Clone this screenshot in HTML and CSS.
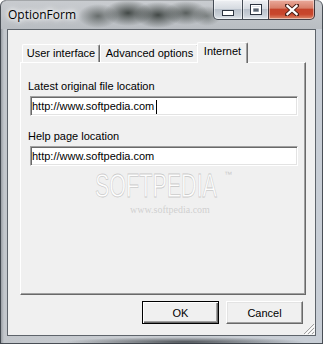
FILE: index.html
```html
<!DOCTYPE html>
<html>
<head>
<meta charset="utf-8">
<link rel="stylesheet" href="styles.css">
</head>
<body>
<div class="window">
  <div class="titlebar">
    <span class="title">OptionForm</span>
    <div class="caption-buttons">
      <div class="cb cb-min">
        <svg width="12" height="6" viewBox="0 0 12 6"><rect x="0.5" y="0.5" width="11" height="5" fill="#fff" stroke="#2c3440" stroke-width="1"/></svg>
      </div>
      <div class="cb cb-max">
        <svg width="12" height="11" viewBox="0 0 12 11"><rect x="0.5" y="0.5" width="11" height="10" fill="none" stroke="#2c3440"/><rect x="1.5" y="1.5" width="9" height="8" fill="none" stroke="#fff" stroke-width="1"/><rect x="2.5" y="3.5" width="7" height="5" fill="none" stroke="#fff" stroke-width="1"/><rect x="3.5" y="4.5" width="5" height="3" fill="#5a6470"/></svg>
      </div>
      <div class="cb cb-close">
        <svg width="14" height="12" viewBox="0 0 14 12"><path d="M2 1.5 L12 10.5 M12 1.5 L2 10.5" stroke="#4a2018" stroke-width="4.2" stroke-linecap="square"/><path d="M2.4 1.9 L11.6 10.1 M11.6 1.9 L2.4 10.1" stroke="#fff" stroke-width="2.2" stroke-linecap="square"/></svg>
      </div>
    </div>
  </div>
  <div class="client">
    <div class="tabctl">
      <div class="tabstrip">
        <div class="tab tab-ui">User interface</div>
        <div class="tab tab-adv">Advanced options</div>
        <div class="tab tab-net active">Internet</div>
      </div>
      <div class="panel">
        <div class="label">Latest original file location</div>
        <div class="input">http://www.softpedia.com<span class="caret"></span></div>
        <div class="label label-2">Help page location</div>
        <div class="input">http://www.softpedia.com</div>
      </div>
    </div>
    <div class="buttons">
      <button class="btn btn-default">OK</button>
      <button class="btn">Cancel</button>
    </div>
    <svg class="grip" width="12" height="12" viewBox="0 0 12 12">
      <path d="M11 1 L1 11 M11 5 L5 11 M11 9 L9 11" stroke="#a0a0a0" stroke-width="1"/>
      <path d="M12 2 L2 12 M12 6 L6 12 M12 10 L10 12" stroke="#ffffff" stroke-width="1"/>
    </svg>
  </div>
  <svg class="watermark" width="150" height="62" viewBox="0 0 150 62">
    <text class="wm-big" x="5" y="26.25" transform="scale(1,1.6)" textLength="122" lengthAdjust="spacingAndGlyphs">SOFTPEDIA</text>
    <text class="wm-tm" x="134" y="22">™</text>
    <text class="wm-url" x="40" y="58">www.softpedia.com</text>
  </svg>
</div>
</body>
</html>
```
FILE: styles.css
```css
* { box-sizing: border-box; }
html, body { margin: 0; padding: 0; }
body {
  width: 323px;
  height: 344px;
  overflow: hidden;
  background: #fff;
  font-family: "Liberation Sans", Arial, sans-serif;
  font-size: 11px;
  color: #000;
}
.window {
  position: relative;
  width: 323px;
  height: 344px;
  display: flex;
  flex-direction: column;
  border-radius: 6px 6px 0 0;
  background:
    radial-gradient(ellipse 120px 5px at 185px 342px, rgba(50,55,60,.8), rgba(50,55,60,0)),
    linear-gradient(to right, #8e9399 0, #c3c7cc 4px, #c9cdd2 50%, #c8ced6 100%);
  box-shadow: inset 0 0 0 1px rgba(50,56,64,.85);
  overflow: hidden;
}
.titlebar {
  height: 29px;
  flex: none;
  display: flex;
  align-items: flex-start;
  padding-right: 8px;
  background:
    radial-gradient(ellipse 20px 12px at 98px 16px, rgba(45,52,48,.6), rgba(45,52,48,0)),
    radial-gradient(ellipse 24px 13px at 128px 13px, rgba(35,42,38,.8), rgba(35,42,38,0)),
    radial-gradient(ellipse 24px 13px at 158px 15px, rgba(35,42,38,.8), rgba(35,42,38,0)),
    radial-gradient(ellipse 22px 12px at 186px 13px, rgba(45,52,48,.7), rgba(45,52,48,0)),
    radial-gradient(ellipse 14px 10px at 207px 16px, rgba(55,62,58,.5), rgba(55,62,58,0)),
    linear-gradient(to bottom, #c9ccd0 0, #b9bdc2 100%);
  border-radius: 6px 6px 0 0;
  box-shadow: inset 0 1px 0 rgba(255,255,255,.5), inset 1px 0 0 rgba(50,56,64,.85), inset -1px 0 0 rgba(50,56,64,.85), inset 0 1px 0 rgba(50,56,64,.85);
}
.title {
  font-family: "Open Sans", "Liberation Sans", sans-serif;
  font-size: 12px;
  line-height: 16px;
  margin: 7px 0 0 8px;
  color: #000;
  text-shadow: 0 0 4px #fff, 0 0 6px #fff, 0 0 8px rgba(255,255,255,.9);
}
.caption-buttons {
  margin-left: auto;
  display: flex;
  height: 20px;
}
.cb {
  height: 20px;
  display: flex;
  align-items: center;
  justify-content: center;
  border: 1px solid rgba(40,48,58,.85);
  border-top: none;
  background: linear-gradient(to bottom, #eef0f3 0, #d6dbe1 45%, #b9c1cb 50%, #c9d0d8 80%, #e1e6ec 100%);
  box-shadow: inset 0 0 0 1px rgba(255,255,255,.45);
}
.cb-min { width: 29px; border-radius: 0 0 0 5px; border-right: none; padding-top: 6px; }
.cb-max { width: 26px; border-right: none; }
.cb-close {
  width: 47px;
  border-radius: 0 0 5px 0;
  background: linear-gradient(to bottom, #eaab9c 0, #d8806a 42%, #c5442b 50%, #c8462c 75%, #dc8a6c 100%);
}
.client {
  width: 309px;
  height: 307px;
  margin: 0 7px;
  flex: none;
  position: relative;
  display: flex;
  flex-direction: column;
  background: #f0f0f0;
  border: 1px solid #5e646b;
}
.tabctl {
  margin: 12px 9px 0 12px;
  width: 286px;
}
.tabstrip {
  position: relative;
  z-index: 1;
  display: flex;
  align-items: flex-end;
  height: 20px;
  padding-left: 2px;
}
.tab {
  height: 18px;
  padding-top: 2px;
  line-height: 13px;
  text-align: center;
  white-space: nowrap;
  background: #f0f0f0;
  border-top: 1px solid #fff;
  border-left: 1px solid #fff;
  border-right: 1px solid #696969;
  box-shadow: inset -1px 0 0 #a0a0a0;
  border-radius: 2px 2px 0 0;
}
.tab-ui { width: 78px; }
.tab-adv { width: 99px; }
.tab-net { width: 47px; }
.tab.active {
  width: 51px;
  height: 21px;
  margin-left: -2px;
  margin-bottom: -1px;
}
.panel {
  height: 233px;
  padding: 17px 0 0 9px;
  background: #f0f0f0;
  border-top: 1px solid #fff;
  border-left: 1px solid #fff;
  border-right: 1px solid #696969;
  border-bottom: 1px solid #696969;
  box-shadow: inset -1px -1px 0 #a0a0a0;
}
.label {
  line-height: 13px;
  margin-left: -2px;
  white-space: nowrap;
}
.label-2 { margin-top: 14px; }
.input {
  width: 268px;
  height: 20px;
  margin-top: 3px;
  padding-left: 1px;
  line-height: 18px;
  background: #fff;
  border: 1px solid;
  border-color: #a0a0a0 #fff #fff #a0a0a0;
  box-shadow: inset 1px 1px 0 #696969, inset -1px -1px 0 #e3e3e3;
  white-space: nowrap;
}
.caret {
  display: inline-block;
  width: 1px;
  height: 14px;
  background: #000;
  margin-left: 2px;
  vertical-align: -4px;
}
.buttons {
  display: flex;
  justify-content: flex-end;
  gap: 7px;
  margin-top: 6px;
  padding-right: 12px;
}
.btn {
  width: 77px;
  height: 23px;
  padding: 0;
  font-family: "Liberation Sans", Arial, sans-serif;
  font-size: 11px;
  color: #000;
  background: #f0f0f0;
  border: 1px solid;
  border-color: #fff #696969 #696969 #fff;
  box-shadow: inset -1px -1px 0 #a0a0a0, inset 1px 1px 0 #e3e3e3;
}
.btn-default {
  border: 1px solid #000;
  box-shadow: inset 1px 1px 0 #fff, inset -1px -1px 0 #696969, inset -2px -2px 0 #a0a0a0;
}
.grip {
  position: absolute;
  right: 0;
  bottom: 0;
}
.watermark {
  position: absolute;
  left: 90px;
  top: 155px;
  pointer-events: none;
  overflow: visible;
}
.wm-big {
  font-family: "Liberation Sans", sans-serif;
  font-size: 21px;
  fill: rgba(255,255,255,.92);
  stroke: rgba(150,150,150,.45);
  stroke-width: 0.5px;
}
.wm-tm {
  font-family: "Liberation Sans", sans-serif;
  font-size: 8px;
  fill: rgba(190,190,190,.8);
}
.wm-url {
  font-family: "Liberation Serif", serif;
  font-size: 10px;
  fill: rgba(185,185,185,.6);
}
```
